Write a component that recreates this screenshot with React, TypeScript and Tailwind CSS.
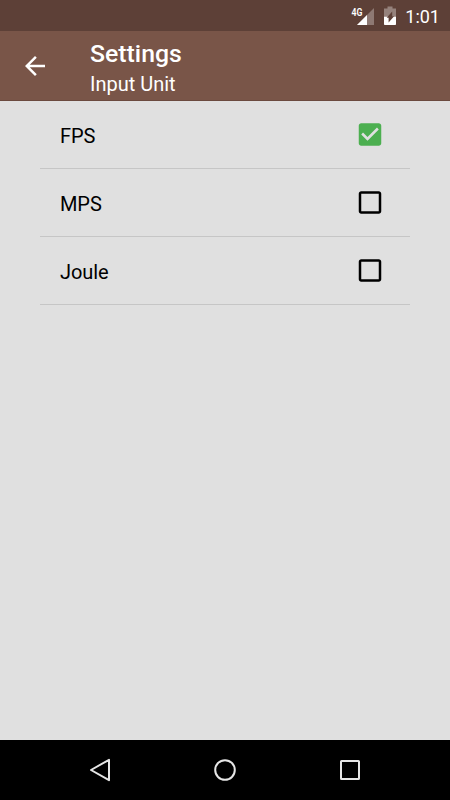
import { useState } from 'react';

const UNITS = ['FPS', 'MPS', 'Joule'];

// ─── Status bar ───────────────────────────────────────────────────────────────
const StatusBar = () => (
  <div className="flex h-[31px] shrink-0 items-center justify-end bg-[#5d4037] pr-[10px] text-white">
    <svg width="24" height="20" viewBox="0 0 24 20" className="mr-[9px]">
      <path d="M24 2v17H7z" fill="#fff" fillOpacity="0.3" />
      <path d="M17 9v10H7z" fill="#fff" />
      <text x="1.6" y="9.6" fontSize="11" fontWeight="600" fill="#fff" textLength="11" lengthAdjust="spacingAndGlyphs">
        4G
      </text>
    </svg>
    <svg width="14" height="20" viewBox="0 0 14 20" className="mr-[8px]">
      <path d="M4.5.5h5v2H13V11H1V2.5h3.5z" fill="#fff" fillOpacity="0.35" />
      <path d="M1 10.7h12v7.6a.8.8 0 0 1-.8.8H1.8a.8.8 0 0 1-.8-.8z" fill="#fff" />
      <path d="M9.2 5.5v4.7h1.9L5.6 16.5v-4.7H3.7z" fill="#5d4037" />
    </svg>
    <span className="pt-[2px] text-[18px] leading-[20px] font-normal">1:01</span>
  </div>
);

// ─── App bar ──────────────────────────────────────────────────────────────────
const Header = () => (
  <header className="flex h-[70px] shrink-0 items-center border-b border-[#6b4a3f] bg-[#795548] pl-5 text-white">
    <button aria-label="Back" className="mr-10">
      <svg width="30" height="30" viewBox="0 0 24 24" fill="currentColor">
        <path d="M20 11H7.83l5.59-5.59L12 4l-8 8 8 8 1.41-1.41L7.83 13H20v-2z" />
      </svg>
    </button>
    <div className="pt-[7px]">
      <h1 className="text-[24.8px] leading-[30px] font-medium">Settings</h1>
      <p className="text-[20px] leading-[30px]">Input Unit</p>
    </div>
  </header>
);

// ─── Unit row ─────────────────────────────────────────────────────────────────
const Checkbox = ({ checked }: { checked: boolean }) => (
  <svg width="30" height="30" viewBox="0 -0.3 24 24" className={checked ? 'text-[#4caf50]' : 'text-black'} fill="currentColor">
    {checked ? (
      <path d="M19 3H5c-1.11 0-2 .9-2 2v14c0 1.1.89 2 2 2h14c1.11 0 2-.9 2-2V5c0-1.1-.89-2-2-2zm-9 14l-5-5 1.41-1.41L10 14.17l7.59-7.59L19 8l-9 9z" />
    ) : (
      <path d="M19 5v14H5V5h14m0-2H5c-1.1 0-2 .9-2 2v14c0 1.1.9 2 2 2h14c1.1 0 2-.9 2-2V5c0-1.1-.9-2-2-2z" />
    )}
  </svg>
);

const UnitRow = ({ label, checked, onSelect }: { label: string; checked: boolean; onSelect: () => void }) => (
  <li className="border-b border-[#c6c6c6]">
    <button onClick={onSelect} className="flex h-[67px] w-full items-center justify-between pr-[25px] pb-px pl-5 text-[20px] text-black">
      <span className="pt-[3px] tracking-[-0.1px]">{label}</span>
      <Checkbox checked={checked} />
    </button>
  </li>
);

// ─── Navigation bar ───────────────────────────────────────────────────────────
const NavBar = () => (
  <nav className="flex h-[60px] shrink-0 items-center justify-center gap-[95px] bg-black">
    <svg width="30" height="30" viewBox="0 0 30 30" fill="none" stroke="#e6e6e6" strokeWidth="2" strokeLinejoin="round">
      <path d="M24 4.8v20.4L6 15z" />
    </svg>
    <svg width="30" height="30" viewBox="0 0 30 30" fill="none" stroke="#e6e6e6" strokeWidth="2">
      <circle cx="15" cy="15" r="9.8" />
    </svg>
    <svg width="30" height="30" viewBox="0 0 30 30" fill="none" stroke="#e6e6e6" strokeWidth="2">
      <rect x="6" y="6" width="18" height="18" rx="0.5" />
    </svg>
  </nav>
);

const App = () => {
  const [unit, setUnit] = useState('FPS');

  return (
    <div className="flex h-screen w-full flex-col bg-[#e0e0e0] font-['Roboto',sans-serif]">
      <StatusBar />
      <Header />
      <ul className="mx-10 flex-1">
        {UNITS.map((name) => (
          <UnitRow key={name} label={name} checked={unit === name} onSelect={() => setUnit(name)} />
        ))}
      </ul>
      <NavBar />
    </div>
  );
};

export default App;
